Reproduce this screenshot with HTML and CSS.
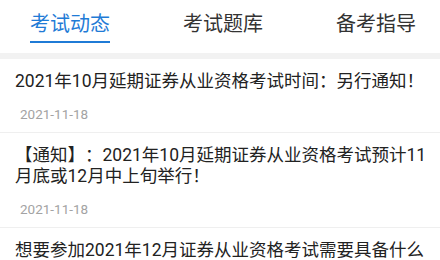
FILE: index.html
```html
<!DOCTYPE html>
<html lang="zh-CN">
<head>
    <meta charset="UTF-8">
    <meta name="viewport" content="width=device-width, initial-scale=1.0">
    <title>考试动态</title>
    <link rel="stylesheet" href="styles.css">
</head>
<body>
    <!-- Tabs -->
    <nav class="tabs">
        <span class="tab active">考试动态</span>
        <span class="tab">考试题库</span>
        <span class="tab">备考指导</span>
    </nav>

    <ul class="news-list">
        <li class="news-item">
            <p class="news-title">2021年10月延期证券从业资格考试时间：另行通知！</p>
            <p class="news-date">2021-11-18</p>
        </li>
        <li class="news-item">
            <p class="news-title">【通知】：2021年10月延期证券从业资格考试预计11月底或12月中上旬举行！</p>
            <p class="news-date">2021-11-18</p>
        </li>
        <li class="news-item">
            <p class="news-title">想要参加2021年12月证券从业资格考试需要具备什么</p>
        </li>
    </ul>
</body>
</html>
```

FILE: styles.css
```css
body {
    margin: 0;
    background-color: #fff;
    font-family: Roboto, "Noto Sans CJK SC", sans-serif;
    text-spacing-trim: space-all;
}

/* Top tab bar */
.tabs {
    display: flex;
    gap: 73px;
    height: 59px;
    padding-left: 30px;
    box-sizing: border-box;
    border-bottom: 6px solid #f2f2f2;
}

.tab {
    padding-top: 9px;
    padding-bottom: 4px;
    height: 28px;
    line-height: 28px;
    font-family: "Noto Sans CJK SC", sans-serif;
    font-size: 20px;
    color: #333;
    border-bottom: 2px solid transparent;
}

.tab.active {
    color: #1f7bd6;
    border-bottom-color: #1f7bd6;
}

/* News list */
.news-list {
    list-style: none;
    margin: 0;
    padding: 0;
}

.news-item {
    padding: 12px 10px 9px 15px;
    border-bottom: 1px solid #efefef;
}

.news-item:last-child {
    border-bottom: none;
    padding-bottom: 0;
}

.news-title {
    margin: 0;
    font-size: 17.5px;
    line-height: 21.5px;
    color: #222;
}

.news-date {
    margin: 12px 0 0;
    padding-left: 5px;
    font-size: 13.5px;
    line-height: 18px;
    color: #a3a3a3;
}
```
